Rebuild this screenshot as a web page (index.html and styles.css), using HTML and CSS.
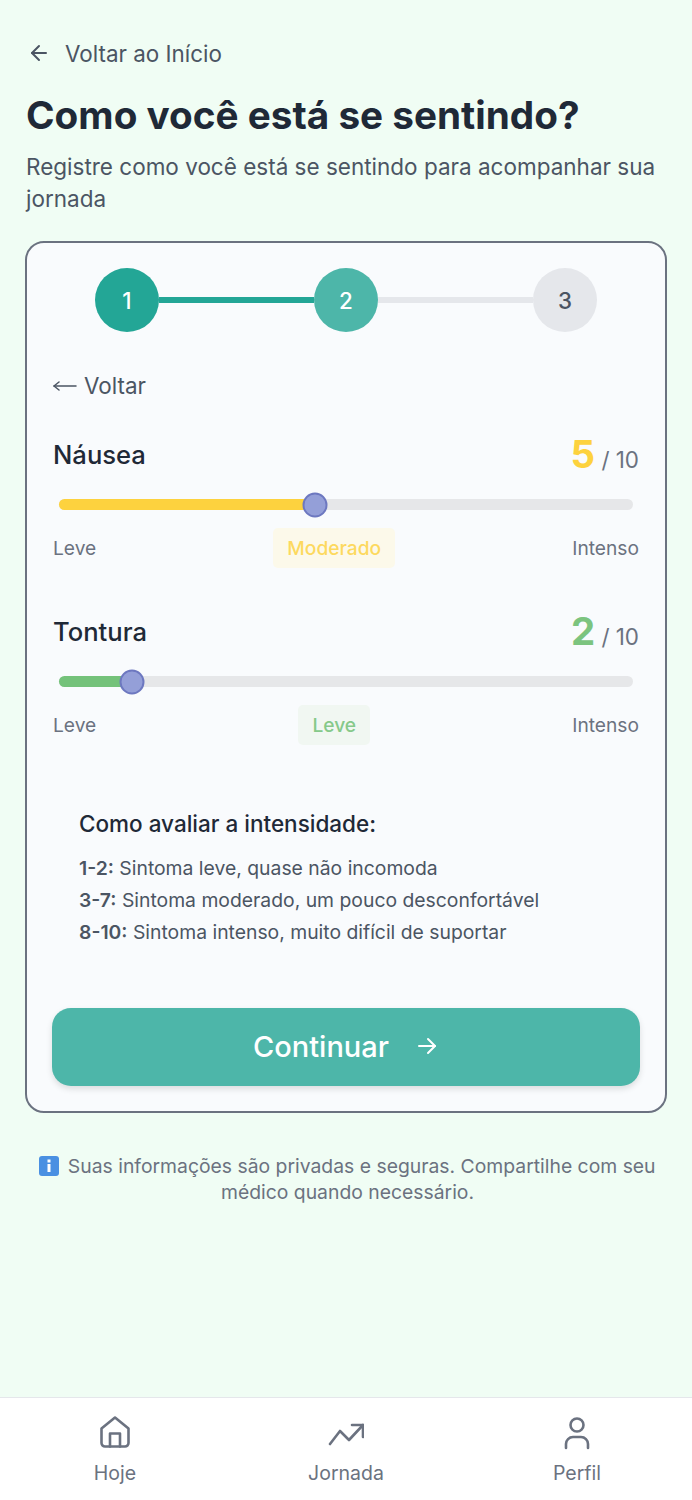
FILE: index.html
```html
<!DOCTYPE html>
<html lang="pt-BR">
  <head>
    <meta charset="UTF-8" />
    <meta name="viewport" content="width=device-width, initial-scale=1.0" />
    <title>Como você está se sentindo?</title>
    <link rel="stylesheet" href="styles.css">
  </head>
  <body>
    <main class="page">
      <a class="home-link" href="#">
        <svg class="home-arrow" viewBox="0 0 24 24" fill="none" stroke="currentColor" stroke-width="2" stroke-linecap="round" stroke-linejoin="round"><path d="M19 12H5" /><path d="M12 19l-7-7 7-7" /></svg>
        Voltar ao Início
      </a>
      <h1 class="title">Como você está se sentindo?</h1>
      <p class="subtitle">Registre como você está se sentindo para acompanhar sua jornada</p>

      <section class="card">
        <!-- Stepper -->
        <div class="stepper">
          <span class="step step-done">1</span>
          <span class="step-line step-line-on"></span>
          <span class="step step-active">2</span>
          <span class="step-line"></span>
          <span class="step step-todo">3</span>
        </div>

        <a class="step-back" href="#">
          <svg class="back-arrow" viewBox="0 0 24 14" fill="none" stroke="currentColor" stroke-width="1.5" stroke-linecap="round" stroke-linejoin="round"><path d="M1 7h22" /><path d="M6 3L1 7l5 4" /></svg>
          Voltar
        </a>

        <!-- Sintomas -->
        <div class="symptom">
          <div class="symptom-head">
            <span class="symptom-name">Náusea</span>
            <span class="symptom-score"><b class="score-num yellow">5</b> / 10</span>
          </div>
          <div class="track">
            <div class="fill fill-yellow" style="width: 44.6%"></div>
            <span class="thumb" style="left: 44.6%"></span>
          </div>
          <div class="scale">
            <span>Leve</span>
            <span class="badge badge-yellow">Moderado</span>
            <span>Intenso</span>
          </div>
        </div>

        <div class="symptom">
          <div class="symptom-head">
            <span class="symptom-name">Tontura</span>
            <span class="symptom-score"><b class="score-num green">2</b> / 10</span>
          </div>
          <div class="track">
            <div class="fill fill-green" style="width: 12.8%"></div>
            <span class="thumb" style="left: 12.8%"></span>
          </div>
          <div class="scale">
            <span>Leve</span>
            <span class="badge badge-green">Leve</span>
            <span>Intenso</span>
          </div>
        </div>

        <!-- Guia -->
        <div class="guide">
          <h2 class="guide-title">Como avaliar a intensidade:</h2>
          <p><b>1-2:</b> Sintoma leve, quase não incomoda</p>
          <p><b>3-7:</b> Sintoma moderado, um pouco desconfortável</p>
          <p><b>8-10:</b> Sintoma intenso, muito difícil de suportar</p>
        </div>

        <button class="continue" type="button">
          Continuar
          <svg class="continue-arrow" viewBox="0 0 24 24" fill="none" stroke="currentColor" stroke-width="2" stroke-linecap="round" stroke-linejoin="round"><path d="M4 12h16" /><path d="M13 5l7 7-7 7" /></svg>
        </button>
      </section>

      <p class="note">
        <svg class="note-icon" viewBox="0 0 20 20"><rect width="20" height="20" rx="3" fill="#4a90e2" /><rect x="8.5" y="8" width="3" height="8" fill="#fff" /><rect x="8.5" y="3.5" width="3" height="3" fill="#fff" /></svg>
        Suas informações são privadas e seguras. Compartilhe com seu médico quando necessário.
      </p>
    </main>

    <!-- Bottom nav -->
    <nav class="nav">
      <a class="nav-item" href="#">
        <svg class="nav-icon" viewBox="0 0 36 36" fill="none" stroke="currentColor" stroke-width="2.6" stroke-linecap="round" stroke-linejoin="round"><path d="M4.5 14.5L18 3.5l13.5 11V29a3.5 3.5 0 0 1-3.5 3.5H8A3.5 3.5 0 0 1 4.5 29z" /><path d="M13 32.5V19.5h10v13" /></svg>
        Hoje
      </a>
      <a class="nav-item" href="#">
        <svg class="nav-icon" viewBox="0 0 36 36" fill="none" stroke="currentColor" stroke-width="2.6" stroke-linecap="round" stroke-linejoin="round"><path d="M2 30l10-13 9 9L35 11" /><path d="M24 11h11v12" /></svg>
        Jornada
      </a>
      <a class="nav-item" href="#">
        <svg class="nav-icon" viewBox="0 0 36 36" fill="none" stroke="currentColor" stroke-width="2.6" stroke-linecap="round" stroke-linejoin="round"><circle cx="18" cy="11" r="6.5" /><path d="M7 34v-4a7 7 0 0 1 7-7h8a7 7 0 0 1 7 7v4" /></svg>
        Perfil
      </a>
    </nav>
  </body>
</html>
```

FILE: styles.css
```css
* {
  box-sizing: border-box;
}
body {
  margin: 0;
  height: 1500px;
  display: flex;
  flex-direction: column;
  background-color: #f0fdf4;
  font-family: Inter, "Liberation Sans", sans-serif;
  color: #1f2937;
}
a {
  color: inherit;
  text-decoration: none;
}
.page {
  flex: 1;
  padding: 39px 25px 0;
}
.home-link {
  display: flex;
  align-items: center;
  gap: 14px;
  height: 28px;
  margin-left: 2px;
  font-size: 22.4px;
  color: #4b5563;
}
.home-arrow {
  width: 24px;
  height: 24px;
}
.title {
  margin: 25px 0 0 1px;
  font-size: 38.7px;
  line-height: 46px;
  font-weight: 700;
}
.subtitle {
  margin: 13px 0 0 1px;
  font-size: 22.5px;
  line-height: 32px;
  color: #4b5563;
}
.card {
  margin-top: 26px;
  padding: 25px 26px;
  height: 872px;
  background-color: #f9fbfd;
  border: 2px solid #6b7280;
  border-radius: 19px;
}
.stepper {
  display: flex;
  align-items: center;
  padding: 0 42px;
}
.step {
  flex: none;
  width: 64px;
  height: 64px;
  border-radius: 50%;
  display: flex;
  align-items: center;
  justify-content: center;
  font-size: 22.4px;
  font-weight: 500;
}
.step-done {
  background-color: #23a696;
  color: #fff;
}
.step-active {
  background-color: #4db6a9;
  color: #fff;
}
.step-todo {
  background-color: #e5e7eb;
  color: #4b5563;
}
.step-line {
  flex: 1;
  height: 6px;
  background-color: #e5e7eb;
}
.step-line-on {
  background-color: #23a696;
}
.step-back {
  display: flex;
  align-items: center;
  gap: 7px;
  margin-top: 40px;
  font-size: 22.4px;
  line-height: 28px;
  color: #4b5563;
}
.back-arrow {
  width: 24px;
  height: 14px;
}
.symptom {
  margin-top: 31px;
}
.symptom + .symptom {
  margin-top: 40px;
}
.symptom-head {
  display: flex;
  justify-content: space-between;
  align-items: center;
  height: 48px;
}
.symptom-name {
  margin-bottom: 2px;
  font-size: 25.6px;
  font-weight: 500;
}
.symptom-score {
  margin-top: 4px;
  font-size: 22.4px;
  line-height: 48px;
  color: #6b7280;
}
.score-num {
  font-size: 38.4px;
  font-weight: 700;
}
.yellow {
  color: #fdd23e;
}
.green {
  color: #7cc47f;
}
.track {
  position: relative;
  height: 11px;
  margin: 20px 6px 0;
  background-color: #e6e7e9;
  border-radius: 6px;
}
.fill {
  height: 100%;
  border-radius: 6px;
}
.fill-yellow {
  background-color: #fdd23e;
}
.fill-green {
  background-color: #74c27a;
}
.thumb {
  position: absolute;
  top: 50%;
  width: 25px;
  height: 25px;
  transform: translate(-50%, -50%);
  background-color: #949fd8;
  border: 2px solid #6d78c0;
  border-radius: 50%;
}
.scale {
  display: flex;
  justify-content: space-between;
  align-items: center;
  height: 40px;
  margin-top: 18px;
  font-size: 19.2px;
  color: #6b7280;
}
.badge {
  padding: 0 14px;
  line-height: 40px;
  border-radius: 5px;
  font-weight: 500;
}
.badge-yellow {
  color: #fdd95f;
  background-color: #fcf9ea;
}
.badge-green {
  color: #86c98a;
  background-color: #f1f7f2;
}
.guide {
  margin: 63px 0 0 26px;
  font-size: 19.35px;
  color: #4b5563;
}
.guide-title {
  margin: 0 0 12px;
  font-size: 22.5px;
  line-height: 32px;
  font-weight: 500;
  color: #1f2937;
}
.guide p {
  margin: 0;
  line-height: 32px;
}
.guide b {
  font-weight: 600;
}
.continue {
  display: flex;
  align-items: center;
  justify-content: center;
  gap: 26px;
  width: calc(100% + 2px);
  height: 78px;
  margin: 60px 0 0 -1px;
  padding: 0 0 2px;
  border: none;
  border-radius: 19px;
  background-color: #4db6a9;
  color: #fff;
  font-family: inherit;
  font-size: 29px;
  font-weight: 500;
  box-shadow: 0 3px 6px rgba(0, 0, 0, 0.12);
  cursor: pointer;
}
.continue-arrow {
  width: 24px;
  height: 24px;
}
.note {
  margin: 40px 0 0;
  padding-left: 3px;
  text-align: center;
  font-size: 19.35px;
  line-height: 26px;
  color: #6b7280;
}
.note-icon {
  width: 20px;
  height: 20px;
  vertical-align: -3px;
  margin-right: 3px;
}
.nav {
  display: flex;
  justify-content: space-between;
  height: 103px;
  padding: 16px 64px 0;
  background-color: #fff;
  border-top: 1px solid #e5e7eb;
}
.nav-item {
  display: flex;
  flex-direction: column;
  align-items: center;
  gap: 10px;
  width: 102px;
  font-size: 19.5px;
  line-height: 26px;
  color: #6b7280;
}
.nav-icon {
  width: 36px;
  height: 36px;
}
```
